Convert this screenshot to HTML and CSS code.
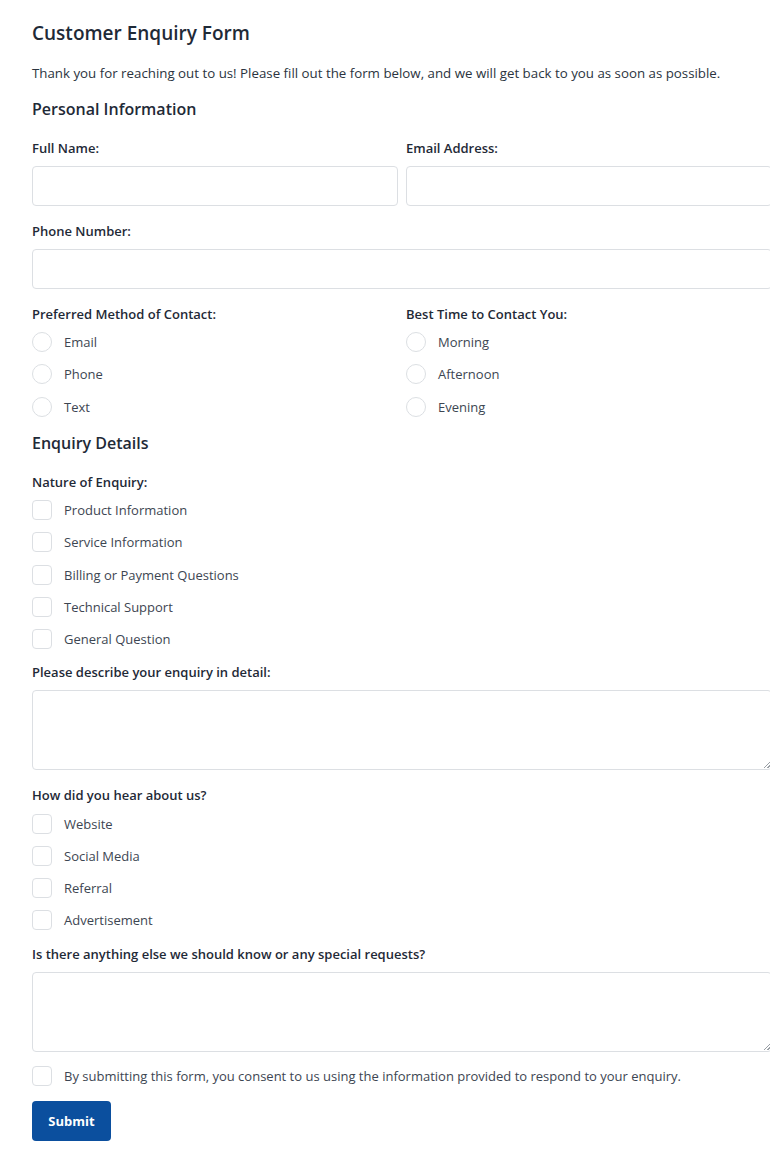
FILE: index.html
```html
<!DOCTYPE html>
<html lang="en">
<head>
<meta charset="utf-8">
<title>Customer Enquiry Form</title>
<link rel="stylesheet" href="styles.css">
</head>
<body>
<div class="page">
  <h1 class="title">Customer Enquiry Form</h1>
  <p class="intro">Thank you for reaching out to us! Please fill out the form below, and we will get back to you as soon as possible.</p>

  <h2 class="section">Personal Information</h2>

  <div class="row two">
    <div class="field">
      <label class="label">Full Name:</label>
      <div class="input"></div>
    </div>
    <div class="field">
      <label class="label">Email Address:</label>
      <div class="input"></div>
    </div>
  </div>

  <div class="field">
    <label class="label">Phone Number:</label>
    <div class="input"></div>
  </div>

  <div class="row two">
    <div class="field group">
      <label class="label">Preferred Method of Contact:</label>
      <div class="options">
        <div class="opt"><span class="radio"></span><span>Email</span></div>
        <div class="opt"><span class="radio"></span><span>Phone</span></div>
        <div class="opt"><span class="radio"></span><span>Text</span></div>
      </div>
    </div>
    <div class="field group">
      <label class="label">Best Time to Contact You:</label>
      <div class="options">
        <div class="opt"><span class="radio"></span><span>Morning</span></div>
        <div class="opt"><span class="radio"></span><span>Afternoon</span></div>
        <div class="opt"><span class="radio"></span><span>Evening</span></div>
      </div>
    </div>
  </div>

  <h2 class="section">Enquiry Details</h2>

  <div class="field group">
    <label class="label">Nature of Enquiry:</label>
    <div class="options">
      <div class="opt"><span class="check"></span><span>Product Information</span></div>
      <div class="opt"><span class="check"></span><span>Service Information</span></div>
      <div class="opt"><span class="check"></span><span>Billing or Payment Questions</span></div>
      <div class="opt"><span class="check"></span><span>Technical Support</span></div>
      <div class="opt"><span class="check"></span><span>General Question</span></div>
    </div>
  </div>

  <div class="field">
    <label class="label">Please describe your enquiry in detail:</label>
    <div class="textarea"><span class="grip"></span></div>
  </div>

  <div class="field group">
    <label class="label">How did you hear about us?</label>
    <div class="options">
      <div class="opt"><span class="check"></span><span>Website</span></div>
      <div class="opt"><span class="check"></span><span>Social Media</span></div>
      <div class="opt"><span class="check"></span><span>Referral</span></div>
      <div class="opt"><span class="check"></span><span>Advertisement</span></div>
    </div>
  </div>

  <div class="field">
    <label class="label">Is there anything else we should know or any special requests?</label>
    <div class="textarea"><span class="grip"></span></div>
  </div>

  <div class="opt consent"><span class="check"></span><span>By submitting this form, you consent to us using the information provided to respond to your enquiry.</span></div>

  <button class="submit" type="button">Submit</button>
</div>
</body>
</html>
```

FILE: styles.css
```css
html, body {
  margin: 0;
  padding: 0;
  background: #ffffff;
  overflow: hidden;
}
body {
  font-family: "Open Sans", "Noto Sans", "Liberation Sans", sans-serif;
  color: #2b3440;
  font-size: 13px;
}
.page {
  width: 740px;
  padding: 20px 0 0 32px;
}
.title {
  font-size: 19px;
  font-weight: 600;
  color: #1f2a37;
  margin: 0 0 17px;
  line-height: 26px;
}
.intro {
  margin: 0 0 14px;
  font-size: 13.3px;
  line-height: 20px;
  color: #2b3440;
}
.section {
  font-size: 16px;
  font-weight: 600;
  color: #1f2a37;
  margin: 0 0 18px;
  line-height: 24px;
}
.row.two {
  display: grid;
  grid-template-columns: 1fr 1fr;
  column-gap: 8px;
}
.field {
  display: flex;
  flex-direction: column;
  margin-bottom: 16px;
}
.field.group {
  margin-bottom: 8px;
}
.label {
  font-weight: 600;
  font-size: 13px;
  line-height: 18px;
  color: #1f2a37;
  margin-bottom: 9px;
}
.input {
  height: 38px;
  border: 1px solid #dcdfe3;
  border-radius: 4px;
  background: #fff;
}
.textarea {
  position: relative;
  height: 78px;
  border: 1px solid #dcdfe3;
  border-radius: 4px;
  background: #fff;
}
.grip {
  position: absolute;
  right: 1px;
  bottom: 1px;
  width: 6px;
  height: 6px;
  background: linear-gradient(135deg, transparent 45%, #9aa0a6 45%, #9aa0a6 55%, transparent 55%, transparent 75%, #9aa0a6 75%, #9aa0a6 85%, transparent 85%);
}
.options {
  display: flex;
  flex-direction: column;
  margin-top: -6px;
}
.opt {
  display: flex;
  align-items: center;
  height: 32.3px;
  color: #3d4652;
  font-size: 13px;
}
.radio, .check {
  flex: none;
  width: 18px;
  height: 18px;
  border: 1px solid #dcdfe3;
  background: #fff;
  margin-right: 12px;
}
.radio {
  border-radius: 50%;
}
.check {
  border-radius: 4px;
}
.consent {
  margin-top: -8px;
  margin-bottom: 9px;
}
.submit {
  display: block;
  font-family: inherit;
  font-size: 13px;
  font-weight: 700;
  color: #fff;
  background: #0b4f9e;
  border: none;
  border-radius: 4px;
  width: 79px;
  height: 40px;
  padding: 0;
  cursor: pointer;
}
```
